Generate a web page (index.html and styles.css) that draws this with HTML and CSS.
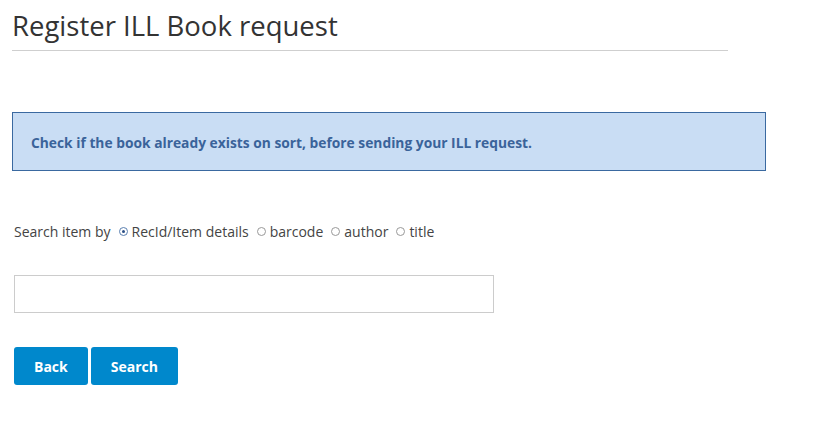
FILE: index.html
```html
<!DOCTYPE html>
<html>
<head>
<meta charset="utf-8">
<link rel="stylesheet" href="styles.css">
</head>
<body>
<div class="page">
  <h1 class="title">Register ILL Book request</h1>
  <div class="alert">Check if the book already exists on sort, before sending your ILL request.</div>
  <div class="search-by">
    <span class="label">Search item by</span>
    <label class="opt"><span class="radio checked"></span>RecId/Item details</label>
    <label class="opt"><span class="radio"></span>barcode</label>
    <label class="opt"><span class="radio"></span>author</label>
    <label class="opt"><span class="radio"></span>title</label>
  </div>
  <div class="field"><input class="input" type="text"></div>
  <div class="actions">
    <button class="btn">Back</button>
    <button class="btn">Search</button>
  </div>
</div>
</body>
</html>
```
FILE: styles.css
```css
html, body {
  margin: 0;
  padding: 0;
  background: #fff;
  font-family: "Open Sans", "Liberation Sans", sans-serif;
  color: #333;
}
.page {
  padding: 0 0 0 12px;
}
.title {
  margin: 0;
  width: 716px;
  font-size: 27.5px;
  font-weight: 400;
  line-height: 34px;
  padding-top: 9px;
  padding-bottom: 7px;
  border-bottom: 1px solid #cfcfcf;
  color: #333;
}
.alert {
  margin-top: 61px;
  width: 734px;
  height: 55px;
  box-sizing: content-box;
  border: 1px solid #3a69a0;
  background: #c9ddf4;
  color: #3a639a;
  font-size: 13.8px;
  font-weight: 700;
  padding: 2px 0 0 18px;
  display: flex;
  align-items: center;
}
.search-by {
  margin-top: 50px;
  padding-left: 2px;
  display: flex;
  align-items: center;
  font-size: 14px;
  color: #444;
  height: 20px;
}
.label { margin-right: 8px; }
.opt {
  display: flex;
  align-items: center;
  margin-right: 8px;
}
.radio {
  width: 9px;
  height: 9px;
  border: 1px solid #999;
  border-radius: 50%;
  margin-right: 4px;
  box-sizing: border-box;
  background: #fff;
  position: relative;
}
.radio.checked {
  border-color: #5a7fb0;
}
.radio.checked::after {
  content: "";
  position: absolute;
  left: 2px;
  top: 2px;
  width: 3px;
  height: 3px;
  border-radius: 50%;
  background: #2b4f86;
}
.field {
  margin-top: 34px;
  padding-left: 2px;
}
.input {
  width: 480px;
  height: 38px;
  box-sizing: border-box;
  border: 1px solid #ccc;
  margin: 0;
  display: block;
}
.actions {
  margin-top: 34px;
  padding-left: 2px;
  display: flex;
  gap: 3px;
}
.btn {
  background: #0088cc;
  color: #fff;
  border: none;
  border-radius: 3px;
  height: 38px;
  padding: 0 20px;
  font-family: "Open Sans", "Liberation Sans", sans-serif;
  font-weight: 700;
  font-size: 14px;
}
```
